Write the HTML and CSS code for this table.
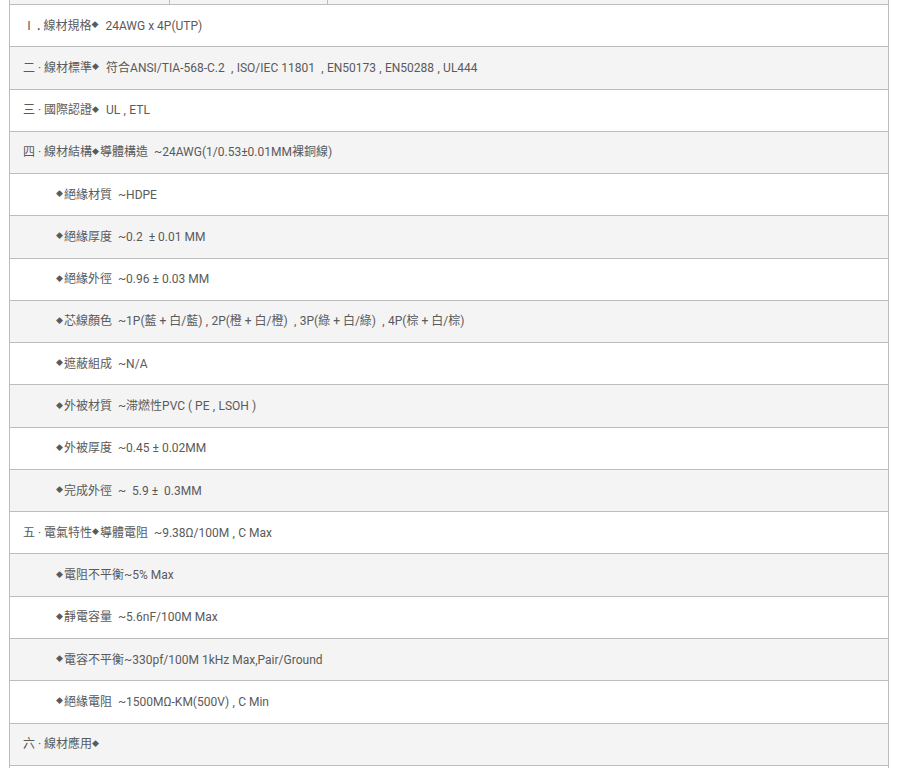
FILE: index.html
```html
<!DOCTYPE html>
<html lang="zh-Hant">
<head>
<meta charset="utf-8">
<title>線材規格</title>
<link rel="stylesheet" href="styles.css">
</head>
<body>
<div class="page">
  <div class="tabs">
    <div class="tab tab-a"></div>
    <div class="tab tab-b"></div>
    <div class="tab tab-c"></div>
  </div>
  <div class="spec">
    <div class="row">Ⅰ<span class="dot">.</span> 線材規格<span class="dia">◆</span>&nbsp; 24AWG x 4P(UTP)</div>
    <div class="row alt">二 · 線材標準<span class="dia">◆</span>&nbsp; 符合ANSI/TIA-568-C.2 <span class="cm">,</span>ISO/IEC 11801 <span class="cm">,</span>EN50173<span class="cm">,</span>EN50288<span class="cm">,</span>UL444</div>
    <div class="row">三 · 國際認證<span class="dia">◆</span>&nbsp; UL<span class="cm">,</span>ETL</div>
    <div class="row alt">四 · 線材結構<span class="dia">◆</span>導體構造 &nbsp;~24AWG(1/0.53±0.01MM裸銅線)</div>
    <div class="row sub"><span class="dia">◆</span>絕緣材質 &nbsp;~HDPE</div>
    <div class="row sub alt"><span class="dia">◆</span>絕緣厚度 &nbsp;~0.2 &nbsp;± 0.01 MM</div>
    <div class="row sub"><span class="dia">◆</span>絕緣外徑 &nbsp;~0.96 ± 0.03 MM</div>
    <div class="row sub alt"><span class="dia">◆</span>芯線顏色 &nbsp;~1P(藍 + 白/藍)<span class="cm">,</span>2P(橙 + 白/橙) <span class="cm">,</span>3P(綠 + 白/綠) <span class="cm">,</span>4P(棕 + 白/棕)</div>
    <div class="row sub"><span class="dia">◆</span>遮蔽組成 &nbsp;~N/A</div>
    <div class="row sub alt"><span class="dia">◆</span>外被材質 &nbsp;~滞燃性PVC ( PE<span class="cm">,</span>LSOH )</div>
    <div class="row sub"><span class="dia">◆</span>外被厚度 &nbsp;~0.45 ± 0.02MM</div>
    <div class="row sub alt"><span class="dia">◆</span>完成外徑 &nbsp;~ &nbsp;5.9 ± &nbsp;0.3MM</div>
    <div class="row">五 · 電氣特性<span class="dia">◆</span>導體電阻 &nbsp;~9.38Ω/100M<span class="cm">,</span>C Max</div>
    <div class="row sub alt"><span class="dia">◆</span>電阻不平衡~5% Max</div>
    <div class="row sub"><span class="dia">◆</span>靜電容量 &nbsp;~5.6nF/100M Max</div>
    <div class="row sub alt"><span class="dia">◆</span>電容不平衡~330pf/100M 1kHz Max,Pair/Ground</div>
    <div class="row sub"><span class="dia">◆</span>絕緣電阻 &nbsp;~1500MΩ-KM(500V)<span class="cm">,</span>C Min</div>
    <div class="row alt">六 · 線材應用<span class="dia">◆</span></div>
    <div class="row"></div>
  </div>
</div>
</body>
</html>
```
FILE: styles.css
```css
html, body {
  margin: 0;
  padding: 0;
  background: #ffffff;
}

.page {
  margin-left: 9px;
  width: 880px;
  box-sizing: border-box;
  border-left: 1px solid #bdbdbd;
  border-right: 1px solid #bdbdbd;
  font-family: Roboto, "Noto Sans CJK TC", sans-serif;
  font-size: 12px;
  font-weight: 400;
  color: #5a5a5a;
}

.tabs {
  display: flex;
  height: 4px;
  background: #f4f4f4;
  border-bottom: 1px solid #bdbdbd;
}

.tab {
  height: 4px;
  box-sizing: border-box;
}

.tab-a {
  width: 160px;
  border-right: 1px solid #bdbdbd;
}

.tab-b {
  width: 158px;
  border-right: 1px solid #bdbdbd;
}

.tab-c {
  flex: 1;
}

.spec {
  display: flex;
  flex-direction: column;
}

.row {
  height: 42.28px;
  box-sizing: border-box;
  border-bottom: 1px solid #bdbdbd;
  display: flex;
  align-items: center;
  padding-left: 13px;
  white-space: pre;
  line-height: 16px;
}

.row.alt {
  background: #f4f4f4;
}

.row.sub {
  padding-left: 46px;
}

.dot {
  font-weight: bold;
  padding-left: 2px;
}

.cm {
  display: inline-block;
  width: 9px;
  text-align: center;
}

.dia {
  font-size: 7px;
  line-height: 1;
  padding: 0 1px 0 0;
}
```
